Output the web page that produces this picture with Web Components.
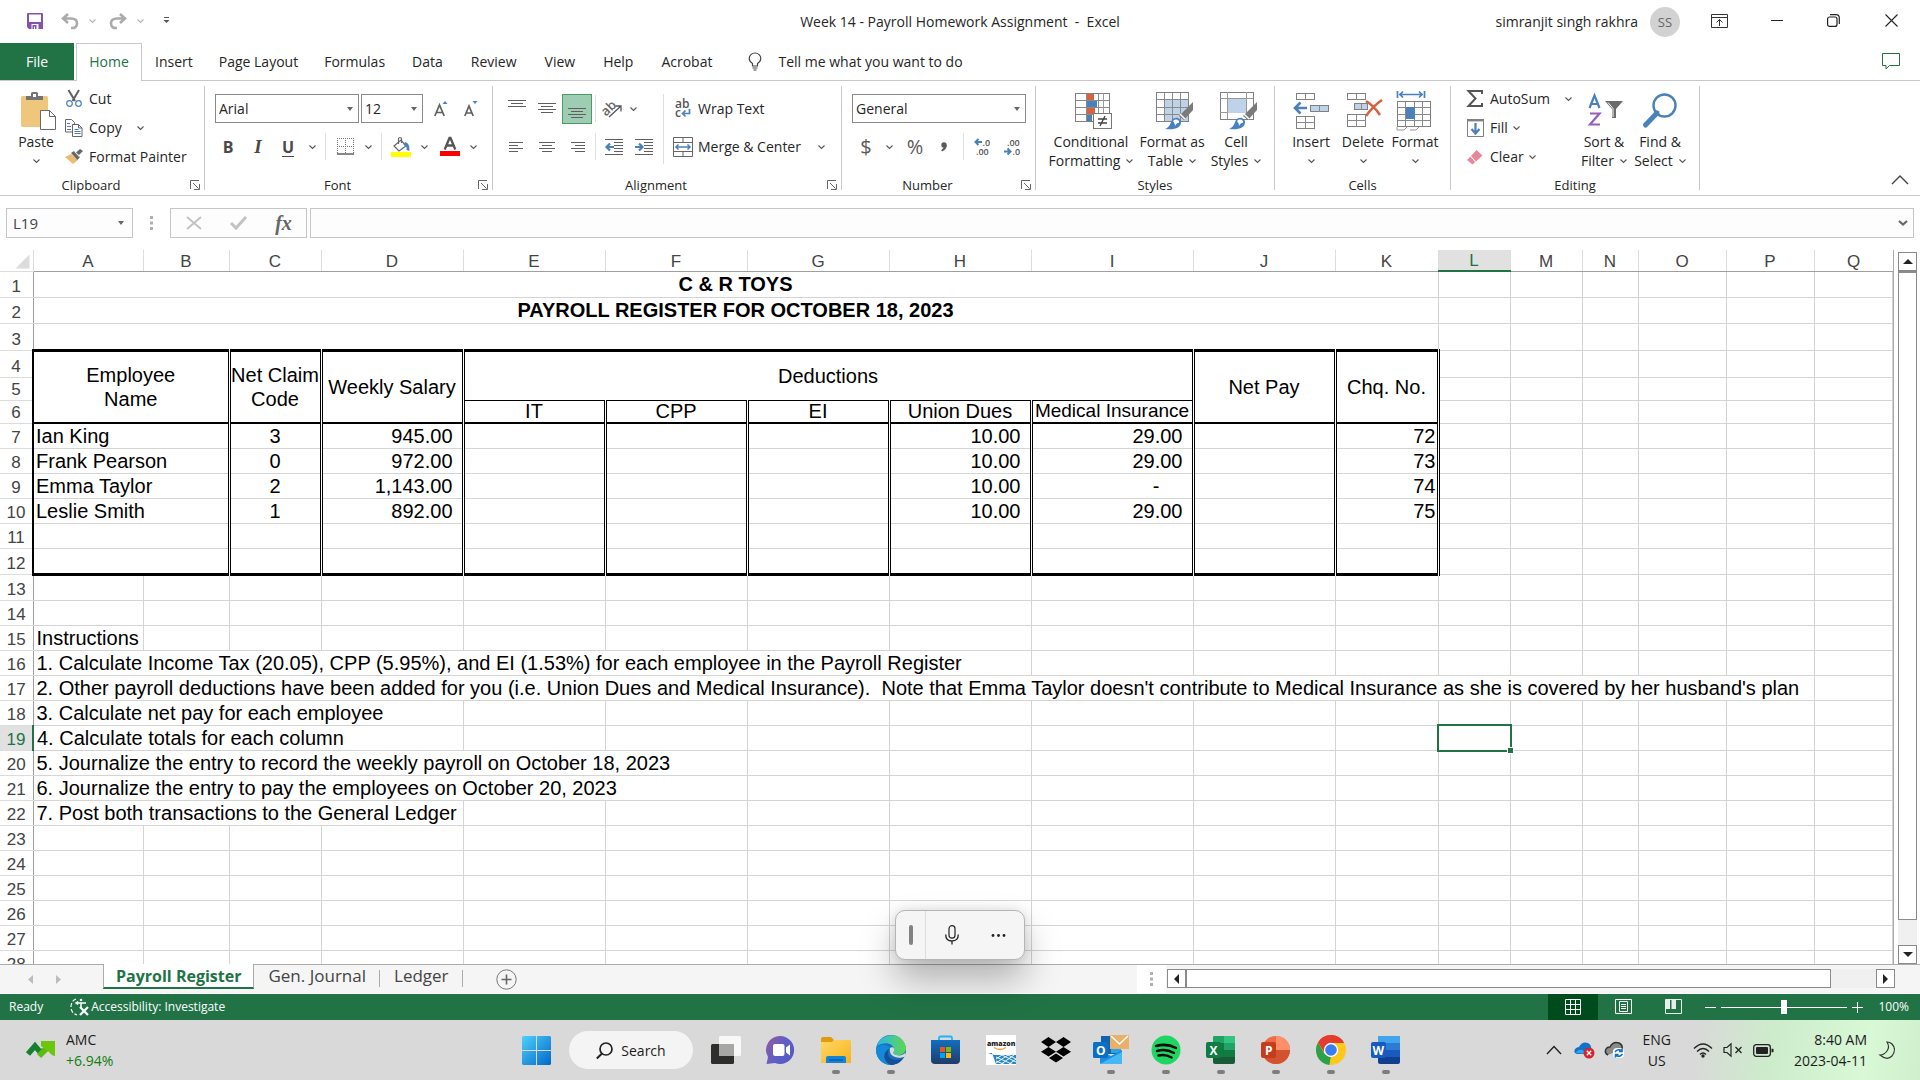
<!DOCTYPE html>
<html lang="en">
<head>
<meta charset="utf-8">
<title>Week 14 - Payroll Homework Assignment - Excel</title>
<style>
html, body { margin: 0; height: 100%; overflow: hidden; background: #fff; }
body { font: 14px/20px "Open Sans", "Noto Sans", sans-serif; color: #262626; }
</style>
</head>
<body>
<excel-app></excel-app>
<script>
const BASE = `
*{box-sizing:border-box}
button,input,select{font:inherit;color:inherit;margin:0;padding:0;border:0;background:none;border-radius:0;outline:0}
button{display:inline-flex;align-items:center;justify-content:center;white-space:nowrap}
`;
function define(name, css, render, after) {
  customElements.define(name, class extends HTMLElement {
    connectedCallback() {
      if (this.shadowRoot) return;
      const t = document.createElement('template');
      t.innerHTML = `<style>${BASE}${css}</style>${render(this)}`;
      this.attachShadow({ mode: 'open' }).append(t.content.cloneNode(true));
      if (after) after(this);
    }
  });
}

/* ---------- icons: [width, height, drawing] ---------- */
const B = '#4a80bb', G = '#6a6a6a';
const gridLines = (x, y, w, h, nx, ny, c = '#8a8a8a') => {
  let s = `<rect x="${x + .5}" y="${y + .5}" width="${w}" height="${h}" fill="none" stroke="#808080"/>`;
  for (let i = 1; i < nx; i++) s += `<path d="M${x + .5 + Math.round(w / nx * i)} ${y + 1}v${h}" stroke="${c}"/>`;
  for (let i = 1; i < ny; i++) s += `<path d="M${x + 1} ${y + .5 + Math.round(h / ny * i)}h${w}" stroke="${c}"/>`;
  return s;
};
const lines = (list, c = '#5f5f5f') => list.map(([x, y, w]) => `<path d="M${x} ${y + .5}h${w}" stroke="${c}"/>`).join('');
const BRUSH = `<path d="M37 10 L37 18 L28 28 L23 24Z" fill="#7b7b7b"/><path d="M24 22l5 5" stroke="#fff" stroke-width="1.5"/><path d="M9 37c5-2 5-5 7-9 3-4 9-2 9 2 0 6-6 8-16 7z" fill="${B}"/><path d="M17 29c3-3 7-1 6 2-1-1-3 1-4 3 0-2-1-4-2-5z" fill="#fff"/>`;
const office = (dark, c1, c2, c3, c4, letter) => `<rect x="7" y="1" width="22" height="28" rx="2" fill="${c4}"/><path d="M7 3q0-2 2-2h9v7H7z" fill="${c1}"/><path d="M18 1h9q2 0 2 2v5H18z" fill="${c2}"/><path d="M7 8h11v7H7z" fill="${c3}"/><path d="M18 8h11v7H18z" fill="${c1}"/><path d="M7 15h22v7H7z" fill="${c3}"/><path d="M7 15h11v7H7z" fill="${dark}" opacity=".6"/><rect x="0" y="7" width="15" height="16" rx="2" fill="${dark}"/>${letter}`;
const ICONS = {
  chev: [7, 4, `<path d="M.5.5l3 3 3-3" fill="none" stroke="#555" stroke-width="1.1"/>`],
  chevLight: [7, 4, `<path d="M.5.5l3 3 3-3" fill="none" stroke="#b5b5b5" stroke-width="1.1"/>`],
  tri: [6, 4, `<path d="M0 0h6L3 4z" fill="#666"/>`],
  save: [16, 16, `<path d="M0 1q0-1 1-1h14q1 0 1 1v15H2l-2-2z" fill="#8452ab"/><path d="M2 1.500h12V9H2z" fill="#fff"/><path d="M4.500 11h7v5h-7z" fill="#fff"/><path d="M5.500 12h4v4H8v-2.500H7V16H5.500z" fill="#8452ab"/>`],
  undo: [18, 16, `<path d="M7 1L2 5.500l5 4.500M2.500 5.500H10q6 0 6 5t-6 4.500" fill="none" stroke="#ababab" stroke-width="2.600"/>`],
  redo: [18, 16, `<path d="M11 1l5 4.500L11 10M15.500 5.500H8q-6 0-6 5t6 4.500" fill="none" stroke="#ababab" stroke-width="2.600"/>`],
  custom: [7, 7, `<path d="M1 .5h5" stroke="#555"/><path d="M.5 3h6l-3 3z" fill="#555"/>`],
  bulb: [14, 19, `<path d="M4.500 14v-2.500C2 10 1.200 8 1.200 6.500a5.800 5.500 0 0 1 11.600 0c0 1.500-.8 3.500-3.300 5V14zM4.500 16h5M5.500 18h3" fill="none" stroke="#444" stroke-width="1.200"/>`],
  ribbonOpt: [17, 14, `<path d="M.5.5h16v13H.5zM.5 3.500h16M8.500 12V5.500M5.500 8.500l3-3 3 3" fill="none" stroke="#333"/>`],
  min: [12, 2, `<path d="M0 .5h12" stroke="#222"/>`],
  restore: [13, 13, `<rect x=".6" y="3" width="9.400" height="9.400" rx="2" fill="none" stroke="#222" stroke-width="1.200"/><path d="M3 .7h6q3.300 0 3.300 3.300v6" fill="none" stroke="#222" stroke-width="1.200"/>`],
  close: [13, 13, `<path d="M.5.5l12 12M12.500.5l-12 12" stroke="#222" stroke-width="1.100"/>`],
  comment: [18, 17, `<path d="M.5.500h17v12H7.500L4 16v-3.500H.5z" fill="#fff" stroke="#217346"/>`],
  paste: [35, 38, `<rect x="0" y="4" width="27" height="31" rx="1.500" fill="#eec67c"/><path d="M5 8V4h5V1.500Q10 0 11.500 0h4Q17 0 17 1.500V4h5v4z" fill="#737373"/><rect x="12" y="2" width="3" height="3" fill="#fff"/><path d="M19.500 18.500h9l6 6V37.500h-15z" fill="#fff" stroke="#6a6a6a"/><path d="M28.500 18.500v6h6" fill="none" stroke="#6a6a6a"/>`],
  cut: [16, 17, `<path d="M2.500 0l6.500 11M13 0L6.500 11" stroke="#606060" stroke-width="2"/><circle cx="3.500" cy="13.500" r="2.800" fill="#fff" stroke="${B}" stroke-width="1.200"/><circle cx="12.500" cy="13.500" r="2.800" fill="#fff" stroke="${B}" stroke-width="1.200"/>`],
  copy: [18, 18, `<path d="M.5.5h6l3 3v9.500h-9z" fill="#fff" stroke="#666"/><path d="M7.500 5.500h6l3.500 3.500v8.500H7.500z" fill="#fff" stroke="#666"/><path d="M13.500 5.500V9H17" fill="none" stroke="#666"/><path d="M2 4.500h3M2 7.500h4M2 10.500h4M9.500 10.500h4M9.500 12.500h6M9.500 14.500h6" stroke="${B}"/>`],
  painter: [18, 15, `<path d="M0 8l6-3 7 6-5 4z" fill="#eabd74"/><path d="M6 4l3-2 6 6-2.500 3z" fill="#666"/><path d="M11 3.500L15 0l3 2-4 4z" fill="#666"/><path d="M9.500 2.500l5 5.500" stroke="#fff" stroke-width=".8"/>`],
  bigA: [14, 16, `<path d="M.8 15L5.500 4l4.700 11M2.500 11.500h6" fill="none" stroke="#606060" stroke-width="1.700"/><path d="M8.500 3L11 0l2.500 3z" fill="${B}"/>`],
  smallA: [14, 16, `<path d="M.8 15L5 5l4.200 10M2.500 12h5" fill="none" stroke="#606060" stroke-width="1.700"/><path d="M8.500 0h5L11 3z" fill="${B}"/>`],
  borders: [17, 17, `<path d="M.5 0v16M16.500 0v16M8.500 0v16M0 .5h17M0 8.500h17" stroke="#777" stroke-dasharray="1 1"/><path d="M0 16h17" stroke="#555" stroke-width="1.400"/>`],
  fill: [20, 20, `<path d="M3 9l7-6 5 6-7 5z" fill="#fff" stroke="#666" stroke-width="1.200"/><path d="M7.500 7V2q0-1.500 1.500-1.500T10.500 2v4" fill="none" stroke="#666" stroke-width="1.200"/><path d="M14 5q5 1 4.500 9l-3-1q1-4-3-5z" fill="${B}"/><rect y="15" width="20" height="5" fill="#ff0"/>`],
  fontcolor: [20, 19, `<path d="M4.700 12.500L9.500 1h1l4.800 11.500M6.500 8.500h7" fill="none" stroke="#555" stroke-width="2.300"/><rect y="14" width="20" height="5" fill="#f00"/>`],
  comma: [8, 10, `<circle cx="4" cy="3" r="2.700" fill="#5a5a5a"/><path d="M6.700 3q.3 4-4.700 6.500l-.8-1.300Q4 6.500 4 4z" fill="#5a5a5a"/>`],
  alTop: [18, 20, lines([[0, 1, 18], [3, 4, 12], [0, 7, 18]])],
  alMid: [18, 20, lines([[0, 4, 18], [3, 7, 12], [0, 10, 18], [3, 13, 12]])],
  alBot: [18, 20, lines([[0, 9, 18], [3, 12, 12], [0, 15, 18], [3, 18, 12]])],
  alL: [16, 12, lines([[0, 1, 14], [0, 4, 9], [0, 7, 14], [0, 10, 9]])],
  alC: [16, 12, lines([[0, 1, 16], [3, 4, 10], [0, 7, 16], [3, 10, 10]])],
  alR: [16, 12, lines([[2, 1, 14], [6, 4, 10], [2, 7, 14], [6, 10, 10]])],
  orient: [20, 20, `<g transform="rotate(-45 8 10)"><text x="-1" y="12" font-family="Open Sans" font-weight="600" font-size="13" fill="#666">ab</text></g><path d="M6 18L18 7M12.500 7H18v5.500" fill="none" stroke="#555" stroke-width="1.300"/>`],
  indentL: [18, 18, lines([[0, 1, 18], [9, 4, 9], [9, 7, 9], [9, 10, 9], [9, 13, 9], [0, 16, 18]]) + `<path d="M9 9H2M5 5.500L1.500 9 5 12.500" fill="none" stroke="${B}" stroke-width="2.200"/>`],
  indentR: [18, 18, lines([[0, 1, 18], [9, 4, 9], [9, 7, 9], [9, 10, 9], [9, 13, 9], [0, 16, 18]]) + `<path d="M0 9h7M4 5.500L7.500 9 4 12.500" fill="none" stroke="${B}" stroke-width="2.200"/>`],
  wrap: [18, 20, `<text x="1" y="9" font-family="Open Sans" font-weight="600" font-size="12" fill="#555">ab</text><text x="1" y="18" font-family="Open Sans" font-weight="600" font-size="12" fill="#555">c</text><path d="M15.500 10v4.500H9M11.500 11.500l-3 3 3 3" fill="none" stroke="${B}" stroke-width="1.700"/>`],
  merge: [20, 20, `<path d="M.5.500h19v19H.5zM.5 5.500h19M.5 14.500h19M10 .5v5M10 14.500v5" fill="none" stroke="#666"/><path d="M3.500 10h13M5.500 7.500L3 10l2.500 2.500M14.500 7.500L17 10l-2.500 2.500" fill="none" stroke="${B}" stroke-width="1.500"/>`],
  decInc: [18, 18, `<path d="M8 4H2M4.500 1L1.500 4l3 3" fill="none" stroke="${B}" stroke-width="2"/><text x="8.500" y="8" font-family="Open Sans" font-size="9" font-weight="600" fill="#555">.0</text><text x="2" y="17" font-family="Open Sans" font-size="9" font-weight="600" fill="#555">.00</text>`],
  decDec: [18, 18, `<text x="3" y="8" font-family="Open Sans" font-size="9" font-weight="600" fill="#555">.00</text><path d="M0 13.500h6M3.500 10.500l3 3-3 3" fill="none" stroke="${B}" stroke-width="2"/><text x="8.500" y="17" font-family="Open Sans" font-size="9" font-weight="600" fill="#555">.0</text>`],
  cond: [38, 36, `<rect x="1" y="1" width="33" height="28" fill="#fff"/><rect x="11" y="1" width="8" height="6" fill="#d8623f"/><rect x="11" y="8" width="11" height="7" fill="${B}"/><rect x="11" y="15" width="9" height="7" fill="#d8623f"/><rect x="11" y="22" width="6" height="7" fill="${B}"/>${gridLines(0, 0, 34, 28, 3, 4)}<path d="M28.500 0v28" stroke="#999"/><rect x="18.500" y="20.500" width="18" height="15" fill="#fff" stroke="#777"/><path d="M23 26h9M23 30h9M30 23l-5 10" stroke="#444" stroke-width="1.400"/>`],
  ftable: [38, 38, `<rect x="9" y="8" width="23" height="22" fill="#bed2e8"/>${gridLines(0, 0, 32, 29, 4, 4)}${BRUSH}`],
  cstyles: [39, 38, `${gridLines(0, 0, 33, 27, 1, 1)}<path d="M7.500 0v27M26.500 0v27M0 6.500h33M0 20.500h33" stroke="#999"/><rect x="8" y="7" width="18" height="14" fill="#bed2e8"/>${BRUSH}`],
  insert: [36, 36, `${gridLines(3, 0, 18, 6, 2, 1)}${gridLines(3, 23, 18, 12, 2, 2)}<rect x="18" y="12" width="17" height="6" fill="#bed2e8"/>${gridLines(17, 12, 18, 6, 2, 1)}<path d="M14 15H3M7.500 9.500L2 15l5.500 5.500" fill="none" stroke="${B}" stroke-width="2.600"/>`],
  del: [36, 36, `${gridLines(0, 0, 18, 6, 2, 1)}${gridLines(0, 21, 18, 12, 2, 2)}<rect x="8" y="10" width="12" height="6" fill="#bed2e8"/>${gridLines(7, 10, 13, 6, 2, 1)}<path d="M19 8q8 5 14 14M35 7Q26 13 19 23" fill="none" stroke="#d8623f" stroke-width="2.600"/>`],
  format: [36, 40, `<path d="M.5 0v7M27.500 0v7M2 3.500h24M6 .5L3 3.500l3 3M22 .5l3 3-3 3" fill="none" stroke="${B}" stroke-width="1.700"/><g transform="translate(0 10)">${gridLines(0, 0, 33, 25, 4, 4)}<rect x="9" y="6" width="9" height="12" fill="${B}"/><path d="M0 26v3h7l3-3M13 29h6l3-3" fill="none" stroke="#999"/></g>`],
  sum: [16, 17, `<path d="M15 4V1H1.500L8.500 8.500 1.500 16H15v-3" fill="none" stroke="#555" stroke-width="2"/>`],
  filldown: [17, 18, `<path d="M.5 1v16.500h16V1" fill="#fff" stroke="#808080"/><path d="M0 1.200h17" stroke="#808080" stroke-width="2.400"/><path d="M8.500 4v10M4.500 10l4 4.500 4-4.500" fill="none" stroke="${B}" stroke-width="2.200"/>`],
  clear: [16, 16, `<path d="M9.500 1L15.500 6.500 9 12.500 4 7z" fill="#e8869a"/><path d="M3.300 7.800L8.200 13l-2.700 2.500L0 11z" fill="#e8869a"/>`],
  sort: [36, 34, `<path d="M1.500 14L6.500 1.500 11.500 14M3 10h7" fill="none" stroke="${B}" stroke-width="2.200"/><path d="M2 19.500h9.500L2 30.500h10" fill="none" stroke="#9a5fbd" stroke-width="2.200"/><path d="M17 7h18l-7 8v9h-4v-9z" fill="#6a6a6a"/><path d="M20 8.500l5 6V23" fill="none" stroke="#fff" stroke-width="1"/>`],
  find: [34, 35, `<circle cx="21.500" cy="12.500" r="11" fill="none" stroke="${B}" stroke-width="2.400"/><path d="M14 20L2.500 32" stroke="${B}" stroke-width="5" stroke-linecap="round"/>`],
  launch: [10, 10, `<path d="M.5 9V.5H9M3 3l5.500 5.500M9.500 4v5.500H4" fill="none" stroke="#666"/>`],
  collapse: [18, 10, `<path d="M1 9l8-8 8 8" fill="none" stroke="#444" stroke-width="1.400"/>`],
  x: [16, 14, `<path d="M1 1l14 12M15 1L1 13" stroke="#c3c3c3" stroke-width="2"/>`],
  check: [17, 14, `<path d="M1 7l5 5L16 1" fill="none" stroke="#c3c3c3" stroke-width="3"/>`],
  dots: [3, 14, `<path d="M0 0h3v3H0zM0 5.500h3v3H0zM0 11h3v3H0z" fill="#b0b0b0"/>`],
  fchev: [10, 6, `<path d="M1 1l4 3.500L9 1" fill="none" stroke="#666" stroke-width="2.200"/>`],
  up: [10, 5, `<path d="M5 0l5 5H0z" fill="#222"/>`], down: [10, 5, `<path d="M5 5L0 0h10z" fill="#222"/>`],
  left: [5, 10, `<path d="M0 5l5-5v10z" fill="#222"/>`], right: [5, 10, `<path d="M5 5L0 0v10z" fill="#222"/>`],
  navL: [5, 9, `<path d="M0 4.500L5 0v9z" fill="#bcbcbc"/>`], navR: [5, 9, `<path d="M5 4.500L0 0v9z" fill="#bcbcbc"/>`],
  plus: [21, 21, `<circle cx="10.500" cy="10.500" r="9.700" fill="none" stroke="#777"/><path d="M10.500 5.500v10M5.500 10.500h10" stroke="#666" stroke-width="1.600"/>`],
  access: [19, 18, `<path d="M6 1Q1 3 1 9t6 8" fill="none" stroke="#fff" stroke-width="1.200" stroke-dasharray="4 2"/><circle cx="11" cy="2" r="1.300" fill="#fff"/><path d="M6 5h10M11 5v5M8 3.500L6 5l2 1.500" fill="none" stroke="#fff" stroke-width="1.500"/><path d="M10 9l8 8M18 9l-8 8" stroke="#fff" stroke-width="2.200"/>`],
  vNormal: [17, 17, `<path d="M.5.5h15v15H.5zM5.500 0v16M10.500 0v16M0 5.500h16M0 10.500h16" fill="none" stroke="#fff"/>`],
  vPage: [17, 16, `<path d="M.5.5h16v14H.5zM4.500 2.500h8v10h-8zM6 5.500h5M6 7.500h5M6 9.500h5" fill="none" stroke="#fff"/>`],
  vBreak: [17, 16, `<path d="M.5.5h16v14H.5z" fill="none" stroke="#e6efe9"/><path d="M1 1h4v9H1zM6.500 1H11v9H6.500z" fill="#e6efe9"/>`],
  stocks: [28, 20, `<path d="M1 14l7-8 6 7 3-3" fill="none" stroke="#178030" stroke-width="5.500"/><path d="M12 16L22 6" stroke="#5bbd13" stroke-width="6"/><path d="M14 1h14v15q-3 0-6-4l-8-6z" fill="#6cc70c"/>`],
  windows: [29, 29, `<defs><linearGradient id="w" x2="1" y2="1"><stop stop-color="#4fd0fb"/><stop offset="1" stop-color="#0067c9"/></linearGradient></defs><path d="M1 0h13v14H0V1zM15 0h13l1 1v13H15zM0 15h14v14H1l-1-1zM15 15h14v13l-1 1H15z" fill="url(#w)"/>`],
  search: [17, 17, `<circle cx="10" cy="7" r="6" fill="none" stroke="#222" stroke-width="1.700"/><path d="M6 11.500L.8 16.500" stroke="#222" stroke-width="2"/>`],
  taskview: [30, 30, `<rect x="0" y="9" width="23" height="20" rx="1.500" fill="#2d2d2b"/><rect x="8" y="1" width="22" height="20" rx="1.500" fill="#f8f8f8"/><path d="M8 9h15v12H9.500Q8 21 8 19.500z" fill="#a7a7a6"/>`],
  chat: [30, 30, `<defs><linearGradient id="c" x2="1" y1=".2" y2=".8"><stop stop-color="#8d5ba3"/><stop offset=".5" stop-color="#5f5fc5"/><stop offset="1" stop-color="#5159c4"/></linearGradient></defs><path d="M15 1a14 14 0 1 1-6 27L.5 29 2 22A14 14 0 0 1 15 1z" fill="url(#c)"/><rect x="7" y="9" width="11.500" height="12" rx="2" fill="#fff"/><path d="M20 12.500l4-3v11l-4-3z" fill="#fff"/>`],
  folder: [30, 30, `<defs><linearGradient id="f" x2="1" y2="1"><stop stop-color="#ffd867"/><stop offset="1" stop-color="#f7b21c"/></linearGradient></defs><path d="M0 4q0-2 2-2h8l3 3v4H0z" fill="#de9c09"/><path d="M0 7h11l2-2h16l1 1v22H0z" fill="url(#f)"/><path d="M5 28v-5q0-2 2-2h16q2 0 2 2v5z" fill="#1383d8"/><path d="M8 25h14" stroke="#0b5ca8" stroke-width="1.500"/>`],
  edge: [30, 30, `<defs><linearGradient id="e" x2="1"><stop stop-color="#2cb6f0"/><stop offset="1" stop-color="#5fd84c"/></linearGradient></defs><circle cx="15" cy="15" r="15" fill="#1671bd"/><path d="M1 11C5-3 27-4 30 13c0 5-5 8-10 7-4-1-2-3-2-5 0-7-10-9-17-4z" fill="url(#e)"/><path d="M0 14c2-5 11-6 14-1-5 2-5 12 2 15l-1 2C7 30 0 24 0 14z" fill="#1489dc"/><path d="M13 14c-4 8 4 14 14 9-3 5-8 7-12 7-8-3-9-13-2-16z" fill="#164f98"/><path d="M14 13c3-2 5 1 4 3s-1 3 2 4c4 1 7 0 9-2l1 3c-7 4-18 1-16-8z" fill="#d9d9d9"/>`],
  store: [30, 30, `<defs><linearGradient id="s" x2="0" y2="1"><stop stop-color="#116fc0"/><stop offset="1" stop-color="#1f3b68"/></linearGradient></defs><path d="M8 7V3q0-1.500 1.500-1.500h10Q21 1.500 21 3v4" fill="none" stroke="#24b4f3" stroke-width="1.800"/><path d="M0 5h29v20q0 4-4 4H4q-4 0-4-4z" fill="url(#s)"/><path d="M9 12h5v5H9z" fill="#f25022"/><path d="M15 12h5v5h-5z" fill="#7fba00"/><path d="M9 18h5v5H9z" fill="#00a4ef"/><path d="M15 18h5v5h-5z" fill="#ffb900"/>`],
  amazon: [30, 30, `<rect width="30" height="30" fill="#fff"/><text x="1" y="11" font-family="Open Sans" font-weight="800" font-size="7" fill="#222">amazon</text><path d="M8 12.500q6 4 12 0" fill="none" stroke="#f29b38" stroke-width="1.300"/><path d="M2 18h4l4 11h20V20H8" fill="#2787c4"/><path d="M10 22l18 8M10 26l10 4M16 20l14 7M22 20l8 4M28 20L14 30M22 20L10 28M16 20l-6 4M30 24l-8 6" stroke="#fff" stroke-width=".9"/>`],
  dropbox: [30, 30, `<path d="M7.500 2L15 7l-7.500 5L0 7zM22.500 2L30 7l-7.500 5L15 7zM7.500 12l7.500 4.800-7.500 4.700L0 16.800zM22.500 12l7.500 4.800-7.500 4.700-7.500-4.700zM15 18.500l7 4.500-7 4.500L8 23z" fill="#000"/>`],
  outlook: [36, 30, `<rect x="8" y="1" width="20" height="18" fill="#0f64b2"/><rect x="18" y="6" width="10" height="12" fill="#2aa4e8"/><path d="M7 15l11 6 11-6v13q0 1-1 1H8q-1 0-1-1z" fill="#1a8fe0"/><path d="M7 29l22-12v12z" fill="#46b9f5"/><rect x="0" y="7" width="15" height="16" rx="1.500" fill="#0a6fc9"/><text x="3" y="20" font-family="Open Sans" font-weight="700" font-size="12" fill="#fff">O</text><rect x="17" y="0" width="19" height="14" fill="#eab06a"/><path d="M18 1l8.500 8L35 1" fill="none" stroke="#fff" stroke-width="1.500"/>`],
  spotify: [30, 30, `<circle cx="15" cy="15" r="14.500" fill="#1fd662"/><path d="M5 11q11-3 20 2M6 16q9-2.500 17 2M7.500 20.500q7-1.500 13 2" fill="none" stroke="#0b0b0b" stroke-width="2.500" stroke-linecap="round"/>`],
  excel: [30, 30, office('#107c41', '#21a366', '#33c481', '#107c41', '#185c37', `<text x="3.500" y="19.500" font-family="Open Sans" font-weight="700" font-size="12" fill="#fff">X</text>`)],
  ppt: [30, 30, `<circle cx="15" cy="15" r="14" fill="#ed6c47"/><path d="M15 1a14 14 0 0 1 14 14H15z" fill="#ff8f6b"/><path d="M29 15a14 14 0 0 1-28 0z" fill="#d35230"/><rect x="0" y="7" width="15" height="16" rx="2" fill="#c43e1c"/><text x="4" y="19.500" font-family="Open Sans" font-weight="700" font-size="12" fill="#fff">P</text>`],
  chrome: [30, 30, `<circle cx="15" cy="15" r="15" fill="#fdc71c"/><path d="M2 7.500A15 15 0 0 1 28 7.500H15z" fill="#e33b2e"/><path d="M2 7.500L8.500 18.700 15 22l-1.500 8A15 15 0 0 1 2 7.500z" fill="#2da04c"/><path d="M2 7.500l6 9.500L15 8h13A15 15 0 0 0 2 7.500z" fill="#e33b2e"/><path d="M13.500 30L21 18.500 15 22z" fill="#fdc71c"/><circle cx="15" cy="15" r="7.200" fill="#fff"/><circle cx="15" cy="15" r="5.800" fill="#3a7df0"/>`],
  word: [30, 30, `<rect x="7" y="1" width="22" height="28" rx="2" fill="#103f91"/><path d="M7 3q0-2 2-2h18q2 0 2 2v5H7z" fill="#41a5ee"/><path d="M7 8h22v7H7z" fill="#2b7cd3"/><path d="M7 15h22v7H7z" fill="#185abd"/><rect x="0" y="7" width="15" height="16" rx="2" fill="#185abd"/><text x="1.500" y="19.500" font-family="Open Sans" font-weight="700" font-size="12" fill="#fff">W</text>`],
  trayUp: [16, 10, `<path d="M1 9l7-7.500L15 9" fill="none" stroke="#222" stroke-width="1.400"/>`],
  onedrive: [21, 18, `<path d="M3 13q-4-1-2-5 2-2 4-2Q8 0 14 2q4 2 3 7 2 2 0 4z" fill="#1272c9"/><path d="M2 12q2-4 6-3l8 4z" fill="#33a5ee"/><circle cx="15" cy="12" r="5.500" fill="#d3252f"/><path d="M12.800 9.800l4.400 4.400M17.200 9.800l-4.400 4.400" stroke="#fff" stroke-width="1.300"/>`],
  sync: [21, 18, `<path d="M4 14q-4-2-2-6 1-2 4-2 3-6 9-4 4 2 3 6" fill="#8b8b8b" stroke="#333" stroke-width="1.500"/><rect x="9" y="7" width="11" height="10" rx="4" fill="#fff"/><path d="M11 11q3-4 7-1M18 7.500V10.500h-3M18.500 13q-3 4-7 1M11.500 16.500v-3h3" fill="none" stroke="#1372c5" stroke-width="1.600"/>`],
  wifi: [20, 16, `<path d="M1 6.500q9-9 18 0M4 9.500q6-6 12 0M7 12.500q3-3 6 0" fill="none" stroke="#222" stroke-width="1.400"/><circle cx="10" cy="14" r="1.700" fill="#222"/>`],
  mute: [20, 14, `<path d="M1 4.500h3L8 .8v12.400L4 9.500H1z" fill="none" stroke="#222" stroke-width="1.200"/><path d="M12.500 4l6 6M18.500 4l-6 6" stroke="#222" stroke-width="1.300"/>`],
  battery: [21, 13, `<rect x=".7" y=".7" width="16.600" height="11.600" rx="2.500" fill="none" stroke="#222" stroke-width="1.300"/><rect x="3" y="3" width="12" height="7" rx="1" fill="#222"/><path d="M18.500 4.500l2 .5v3l-2 .5z" fill="#222"/>`],
  moon: [17, 18, `<path d="M8 1q3 5 0 9t-7 4q7 6 12 1 5-7 0-12-2-2-5-2z" fill="none" stroke="#333" stroke-width="1.200"/>`],
  mic: [14, 20, `<rect x="4" y=".7" width="6" height="12.500" rx="3" fill="none" stroke="#222" stroke-width="1.200"/><path d="M.7 9.500q0 6.500 6.300 6.500t6.300-6.500M7 16v3.500" fill="none" stroke="#222" stroke-width="1.300"/>`],
  more: [15, 3, `<circle cx="2" cy="1.500" r="1.400" fill="#222"/><circle cx="7.500" cy="1.500" r="1.400" fill="#222"/><circle cx="13" cy="1.500" r="1.400" fill="#222"/>`]
};
define('ui-icon', `:host{display:inline-flex;flex:none}svg{display:block;overflow:visible}`, el => {
  const [w, h, d] = ICONS[el.getAttribute('name')];
  return `<svg width="${w}" height="${h}" viewBox="0 0 ${w} ${h}" aria-hidden="true">${d}</svg>`;
});
const icon = n => `<ui-icon name="${n}"></ui-icon>`;

/* ---------- ribbon pieces ---------- */
define('icon-button', `:host{display:inline-flex;flex:none;width:30px;height:30px}button{width:100%;height:100%}:host([active]) button{background:#9fcdb3;border:1px solid #4c9a6c}`,
  el => `<button type="button" aria-label="${el.getAttribute('label') || el.getAttribute('icon')}">${icon(el.getAttribute('icon'))}</button>`);
define('text-button', `:host{display:flex;height:29px}button{gap:5px}.i{width:20px;display:flex;justify-content:center}.c{display:flex;padding-left:var(--chev-gap,4px)}`,
  el => `<button type="button"><span class="i">${icon(el.getAttribute('icon'))}</span><slot></slot>${el.hasAttribute('chev') ? `<span class="c">${icon('chev')}</span>` : ''}</button>`);
define('big-button', `:host{display:flex}button{width:100%;flex-direction:column;justify-content:flex-start;padding-top:5px;line-height:19px}.i{height:43px;display:flex;align-items:center;padding-left:var(--icon-inset,0)}.r{height:19px;display:flex;align-items:center;gap:6px}`,
  el => `<button type="button"><span class="i">${icon(el.getAttribute('icon'))}</span><span>${el.getAttribute('top')}</span><span class="r">${el.hasAttribute('bottom') ? `<span>${el.getAttribute('bottom')}</span>` : ''}${icon('chev')}</span></button>`);
define('combo-box', `:host{display:flex;position:relative;height:29px}select{appearance:none;width:100%;border:1px solid #8a8a8a;padding:0 3px;background:#fff}ui-icon{position:absolute;right:6px;top:13px;pointer-events:none}`,
  el => `<select aria-label="${el.getAttribute('label')}"><option>${el.getAttribute('value')}</option></select>${icon('tri')}`);
define('ribbon-group', `:host{display:flex;flex:none}section{flex:1;display:flex;flex-direction:column;padding-top:3px}.body{height:87px;display:flex}.foot{display:flex;padding-top:4px;align-items:center;height:24px;text-align:center;font-size:13px}.foot span{flex:1}.foot button{width:22px;padding-left:4px}.sep{width:1px;margin:5px 0;background:#c8c8c8}`,
  el => `<section aria-label="${el.getAttribute('label')}"><div class="body"><slot></slot></div><div class="foot"><span>${el.getAttribute('label')}</span>${el.hasAttribute('launch') ? `<button type="button" aria-label="More ${el.getAttribute('label')} options">${icon('launch')}</button>` : ''}</div></section><div class="sep"></div>`);

define('excel-ribbon', `
:host{display:flex;border-bottom:1px solid #c8c8c8;height:115px;flex:none}
.col{display:flex;flex-direction:column}
.two{display:flex;flex-direction:column;gap:9px;padding-top:10px}
.two.r{padding-left:9px}
.row{display:flex;align-items:center;height:29px}
.vs{width:1px;height:27px;background:#dedede;margin:0 5px 0 4px}
.vt{width:1px;height:70px;background:#dedede;margin-top:10px}
.ch{width:18px}.cs{width:12px}.w28{width:28px}
.g{font-weight:700;color:#4a4a4a;width:30px;height:30px;font-size:16px}
.sym{color:#5a5a5a;font-size:20px;height:30px}
.end{margin-left:auto;align-self:flex-end;padding:0 11px 5px 0}
`, () => `
<ribbon-group label="Clipboard" launch style="width:205px">
  <big-button icon="paste" top="Paste" style="width:64px;margin-left:4px;--icon-inset:4px"></big-button>
  <div class="col" style="margin-left:-4px"><text-button icon="cut">Cut</text-button><text-button icon="copy" chev style="--chev-gap:10px">Copy</text-button><text-button icon="painter">Format Painter</text-button></div>
</ribbon-group>
<ribbon-group label="Font" launch style="width:288px">
  <div class="two" style="padding-left:8px">
    <div class="row" style="padding-left:2px"><combo-box label="Font" value="Arial" style="width:144px;margin-right:2px"></combo-box><combo-box label="Font size" value="12" style="width:62px;margin-right:3px"></combo-box><icon-button icon="bigA" label="Increase font size"></icon-button><icon-button icon="smallA" label="Decrease font size"></icon-button></div>
    <div class="row"><button class="g">B</button><button class="g" style="font-family:'Liberation Serif';font-style:italic;font-size:19px">I</button><button class="g" style="text-decoration:underline;text-underline-offset:3px">U</button><icon-button class="ch" icon="chev"></icon-button><i class="vs"></i><icon-button class="w28" icon="borders"></icon-button><icon-button class="ch" icon="chev"></icon-button><i class="vs"></i><icon-button class="w28" icon="fill"></icon-button><icon-button class="ch" icon="chev"></icon-button><icon-button icon="fontcolor" style="width:34px"></icon-button><icon-button class="ch" icon="chev" style="width:12px"></icon-button></div>
  </div>
</ribbon-group>
<ribbon-group label="Alignment" launch style="width:349px">
  <div class="two" style="padding-left:9px;width:170px">
    <div class="row"><icon-button icon="alTop"></icon-button><icon-button icon="alMid"></icon-button><icon-button icon="alBot" active></icon-button><i class="vs" style="margin:0 3px"></i><icon-button class="w28" icon="orient"></icon-button><icon-button class="cs" icon="chev"></icon-button></div>
    <div class="row"><icon-button icon="alL"></icon-button><icon-button icon="alC"></icon-button><icon-button icon="alR"></icon-button><i class="vs" style="margin:0 3px"></i><icon-button icon="indentL"></icon-button><icon-button icon="indentR"></icon-button></div>
  </div><i class="vt"></i>
  <div class="two r"><text-button icon="wrap">Wrap Text</text-button><text-button icon="merge" chev style="--chev-gap:12px">Merge &amp; Center</text-button></div>
</ribbon-group>
<ribbon-group label="Number" launch style="width:194px">
  <div class="two" style="padding-left:10px">
    <combo-box label="Number format" value="General" style="width:174px"></combo-box>
    <div class="row"><button class="sym" style="width:28px">$</button><icon-button class="ch" icon="chev"></icon-button><button class="sym" style="width:34px">%</button><icon-button icon="comma" label="Comma style" style="width:24px"></icon-button><i class="vs" style="margin:0 4px 0 7px"></i><icon-button icon="decInc"></icon-button><icon-button icon="decDec"></icon-button></div>
  </div>
</ribbon-group>
<ribbon-group label="Styles" style="width:239px;--icon-inset:6px"><big-button icon="cond" top="Conditional" bottom="Formatting" style="width:96px;margin-left:7px"></big-button><big-button icon="ftable" top="Format as" bottom="Table" style="width:66px"></big-button><big-button icon="cstyles" top="Cell" bottom="Styles" style="width:62px"></big-button></ribbon-group>
<ribbon-group label="Cells" style="width:176px"><big-button icon="insert" top="Insert" style="width:52px;margin-left:10px"></big-button><big-button icon="del" top="Delete" style="width:52px;--icon-inset:4px"></big-button><big-button icon="format" top="Format" style="width:52px"></big-button></ribbon-group>
<ribbon-group label="Editing" style="width:249px">
  <div class="col" style="padding-left:14px;width:125px"><text-button icon="sum" chev style="--chev-gap:10px">AutoSum</text-button><text-button icon="filldown" chev style="--chev-gap:0">Fill</text-button><text-button icon="clear" chev style="--chev-gap:0">Clear</text-button></div>
  <big-button icon="sort" top="Sort &amp;amp;" bottom="Filter" style="width:56px;--icon-inset:4px"></big-button><big-button icon="find" top="Find &amp;amp;" bottom="Select" style="width:56px"></big-button>
</ribbon-group>
<div class="end"><button type="button" aria-label="Collapse ribbon">${icon('collapse')}</button></div>`);

define('title-bar', `
:host{display:grid;grid-template-columns:1fr auto 1fr;height:43px;align-items:center;flex:none}
.q{display:flex;align-items:center;padding:0 0 2px 27px}.q :nth-child(2){margin-left:18px}.q :nth-child(3),.q :nth-child(5){margin-left:10px}.q :nth-child(4){margin-left:13px}.q :nth-child(6){margin-left:19px}
.t{white-space:pre}
.u{display:flex;align-items:center;justify-content:flex-end}
.av{width:30px;height:30px;border-radius:50%;background:#d2d2d2;color:#666;font-size:13px;line-height:30px;text-align:center;margin:0 19px 0 12px}
.u button{width:57px;height:38px}.u .o{width:40px;margin-right:9px}.u .z{width:58px}
.u button ui-icon{padding-bottom:2px}
`, () => `<div class="q"><button aria-label="Save">${icon('save')}</button><button aria-label="Undo">${icon('undo')}</button><button aria-label="Undo list">${icon('chevLight')}</button><button aria-label="Redo">${icon('redo')}</button><button aria-label="Redo list">${icon('chevLight')}</button><button aria-label="Customize">${icon('custom')}</button></div>
<div class="t">Week 14 - Payroll Homework Assignment  -  Excel</div>
<div class="u"><span>simranjit singh rakhra</span><span class="av">SS</span><button class="o" aria-label="Ribbon display options">${icon('ribbonOpt')}</button><button aria-label="Minimize">${icon('min')}</button><button aria-label="Restore">${icon('restore')}</button><button class="z" aria-label="Close">${icon('close')}</button></div>`);

define('tab-strip', `
:host{display:flex;height:38px;flex:none}
nav{display:flex;flex:1;border-bottom:1px solid #c8c8c8}
a{display:block;padding:0 13px;line-height:37px;height:38px;color:inherit;text-decoration:none}
a:nth-child(n+6){padding:0 14px}
a.file{background:#217346;color:#fff;width:74px;text-align:center;padding:0;height:37px;margin-right:2px}
a.on{color:#217346;border:1px solid #c8c8c8;border-bottom:0;background:#fff;padding:0;width:66px;text-align:center;line-height:36px}
.tell{padding-left:22px;display:flex;align-items:center;gap:16px;height:37px}
.cm{margin-left:auto;padding-right:20px}
`, () => `<nav><a class="file" href="#file">File</a><a class="on" href="#home">Home</a>${['Insert', 'Page Layout', 'Formulas', 'Data', 'Review', 'View', 'Help', 'Acrobat'].map(t => `<a href="#${t.toLowerCase().replace(' ', '-')}">${t}</a>`).join('')}<button class="tell">${icon('bulb')}<span>Tell me what you want to do</span></button><button class="cm" aria-label="Comments">${icon('comment')}</button></nav>`);

define('formula-bar', `
:host{display:flex;padding:12px 6px 12px;height:54px;flex:none}
.b{border:1px solid #c6c6c6;background:#fdfdfd;height:30px;display:flex;align-items:center}
.n{width:127px;padding:0 8px 0 6px}.n input{width:100%;font-size:15px;color:#444}
.d{width:37px;display:flex;align-items:center;justify-content:center}
.k{width:137px}.k button{flex:1;height:28px}.fx{font:italic 700 20px/24px "Liberation Serif",serif;color:#666}
.f{flex:1;margin-left:3px;padding:0 5px}.f input{flex:1}
`, () => `<div class="b n"><input aria-label="Name box" value="L19">${icon('tri')}</div><div class="d">${icon('dots')}</div><div class="b k"><button aria-label="Cancel">${icon('x')}</button><button aria-label="Enter">${icon('check')}</button><button class="fx">fx</button></div><div class="b f"><input aria-label="Formula bar">${icon('fchev')}</div>`);

/* ---------- worksheet ---------- */
const COLS = { A: 110, B: 86, C: 92, D: 142, E: 142, F: 142, G: 142, H: 142, I: 162, J: 142, K: 103, L: 72, M: 72, N: 56, O: 88, P: 88, Q: 0 };
const ROW_H = { 1: 26, 2: 26, 3: 27, 4: 27, 5: 23, 6: 23, 12: 26, 13: 26 };
const td = (t = '', cls = '', cs = 1, rs = 1) => `<td class="${cls}" colspan="${cs}" rowspan="${rs}">${t}</td>`;
const blanks = n => td().repeat(n);
const STAFF = [['Ian King', 3, '945.00', '29.00', 72], ['Frank Pearson', 0, '972.00', '29.00', 73], ['Emma Taylor', 2, '1,143.00', '-', 74], ['Leslie Smith', 1, '892.00', '29.00', 75]];
const NOTES = {
  15: [1, 'Instructions'], 16: [8, '1. Calculate Income Tax (20.05), CPP (5.95%), and EI (1.53%) for each employee in the Payroll Register'],
  17: [16, "2. Other payroll deductions have been added for you (i.e. Union Dues and Medical Insurance).  Note that Emma Taylor doesn't contribute to Medical Insurance as she is covered by her husband's plan"],
  18: [4, '3. Calculate net pay for each employee'], 19: [4, '4. Calculate totals for each column'],
  20: [6, '5. Journalize the entry to record the weekly payroll on October 18, 2023'],
  21: [6, '6. Journalize the entry to pay the employees on October 20, 2023'], 22: [4, '7. Post both transactions to the General Ledger']
};
function rowCells(r) {
  if (r === 1) return td('C &amp; R TOYS', 'c b', 11) + blanks(6);
  if (r === 2) return td('PAYROLL REGISTER FOR OCTOBER 18, 2023', 'c b', 11) + blanks(6);
  if (r === 3) return td('', 'thick', 11) + blanks(6);
  if (r === 4) return td('Employee<br>Name', 'h first', 2, 3) + td('Net Claim<br>Code', 'h', 1, 3) + td('Weekly Salary', 'h', 1, 3) + td('Deductions', 'h ded', 5, 2) + td('Net Pay', 'h', 1, 3) + td('Chq. No.', 'h', 1, 3) + blanks(6);
  if (r === 5) return blanks(6);
  if (r === 6) return ['IT', 'CPP', 'EI', 'Union Dues'].map(t => td(t, 'h')).join('') + td('Medical Insurance', 'h fit') + blanks(6);
  if (r <= 12) {
    const s = STAFF[r - 7] || ['', '', '', '', ''], l = r === 12 ? ' last' : '', e = td('', 'g' + l);
    return td(s[0], 'g first' + l, 2) + td(s[1], 'g c' + l) + td(s[2], 'g n' + l) + e + e + e + td(s[0] ? '10.00' : '', 'g n' + l) + td(s[3], (s[3] === '-' ? 'g n dash' : 'g n') + l) + e + td(s[4], 'g q' + l) + blanks(6);
  }
  if (NOTES[r]) {
    const [n, t] = NOTES[r];
    return td(t, '', n) + (r === 19 ? blanks(7) + '<td class="sel"><div></div></td>' + blanks(5) : blanks(17 - n));
  }
  return blanks(17);
}
define('work-sheet', `
:host{display:block;overflow:hidden;border-right:1px solid #ababab}
table{border-collapse:collapse;table-layout:fixed;width:100%;font:20px/24px "Liberation Sans",Arial,sans-serif;color:#000}
th,td{padding:0;font-weight:400;white-space:pre;overflow:visible}
td{border:1px solid #d4d4d4;padding:0 3px;height:0}
tr.r6 td{line-height:20px}
thead th{font-size:17px;line-height:18px;color:#444;border-left:1px solid #dcdcdc;border-bottom:1px solid #9f9f9f;height:21px;vertical-align:bottom}
thead th:first-child{border-left:0;border-bottom-color:#dcdcdc}
.corner{width:14px;height:14px;margin:0 3px 2px auto;background:#dcdcdc;clip-path:polygon(100% 0,100% 100%,0 100%)}
tbody th{font-size:17px;line-height:20px;color:#444;border-right:1px solid #9f9f9f;border-bottom:1px solid #dcdcdc;vertical-align:bottom}
th.on{background:#e1e1e1;color:#217346}
thead th.on{border-bottom:2px solid #217346}tbody th.on{border-right:2px solid #217346}
.c{text-align:center}.b{font-weight:700}
.thick{border-bottom:3px solid #000}
.h{text-align:center;border-left:3px double #000;border-right:3px double #000;border-bottom:2px solid #000;border-top:1px solid #000;padding:0}
.ded{border-bottom:1px solid #000}
.fit{font-size:19px}
tr.r4 .h{border-top:3px solid #000}
.g{border-left:3px double #000;border-right:3px double #000;padding:0 1px}
.first{border-left:2px solid #000}.g.first{padding-left:2px}
.n{text-align:right;padding-right:9px}.dash{padding-right:32px}.q{text-align:right}
.last{border-bottom:3px solid #000}
.sel{position:relative;padding:0}
.sel div{position:absolute;inset:-2px;border:2px solid #217346}
.sel div::after{content:"";position:absolute;right:-4px;bottom:-4px;width:5px;height:5px;background:#217346;border:1px solid #fff}
`, () => {
  let rows = '';
  for (let r = 1; r <= 28; r++) rows += `<tr class="r${r}" style="height:${ROW_H[r] || 25}px"><th scope="row"${r === 19 ? ' class="on"' : ''}>${r}</th>${rowCells(r)}</tr>`;
  return `<table><colgroup><col style="width:33px">${Object.values(COLS).map(w => `<col${w ? ` style="width:${w}px"` : ''}>`).join('')}</colgroup><thead><tr><th><div class="corner"></div></th>${Object.keys(COLS).map(c => `<th scope="col"${c === 'L' ? ' class="on"' : ''}>${c}</th>`).join('')}</tr></thead><tbody>${rows}</tbody></table>`;
});
define('scroll-bar', `
:host{display:flex;background:#f0f0f0}
:host([vertical]){flex-direction:column}
button{width:19px;height:19px;border:1px solid #8a8a8a;background:#fff;flex:none}
.t{border:1px solid #8a8a8a;background:#fff;flex:var(--thumb)}.s{flex:var(--space)}
:host([vertical]) .t{border-top-width:2px}
`, el => { const v = el.hasAttribute('vertical'); return `<button aria-label="Back">${icon(v ? 'up' : 'left')}</button><div class="t"></div><div class="s"></div><button aria-label="Forward">${icon(v ? 'down' : 'right')}</button>`; });

define('sheet-tabs', `
:host{display:flex;height:30px;background:#f5f5f5;border-top:1px solid #ababab;border-bottom:1px solid #fff;color:#444;flex:none}
.nav{width:103px;display:flex;gap:23px;padding-left:28px;align-items:center}
.tab{height:22px;font-size:17px;padding:0 14px;background:linear-gradient(#ababab,#ababab) right bottom/1px 17px no-repeat}
.on{font-size:16px;font-weight:700;color:#217346;background:#fff;border-bottom:2px solid #217346;border-left:1px solid #ababab;border-right:1px solid #ababab;padding:0 12px;margin-top:-1px;height:25px}
.add{margin-left:33px;height:29px}
.d{margin-left:auto;width:29px;background:#fff;display:flex;align-items:center;justify-content:center}
scroll-bar{width:728px;height:19px;margin:4px 25px 0 1px}
`, () => `<div class="nav"><button aria-label="Previous sheet">${icon('navL')}</button><button aria-label="Next sheet">${icon('navR')}</button></div><button class="tab on">Payroll Register</button><button class="tab">Gen. Journal</button><button class="tab">Ledger</button><button class="add" aria-label="New sheet">${icon('plus')}</button><div class="d">${icon('dots')}</div><scroll-bar style="--thumb:646;--space:45"></scroll-bar>`);

define('status-bar', `
:host{display:flex;align-items:center;height:26px;background:#217346;color:#fff;font-size:12px;flex:none}
.a{gap:2px;margin-left:27px}
.r{margin-left:auto;display:flex;align-items:center;height:26px}
.v{width:50px;height:26px}.on{background:#004b1c}
input{appearance:none;width:126px;height:20px;margin:0 5px;background:linear-gradient(#fff,#fff) center/100% 1px no-repeat}
input::-webkit-slider-thumb{appearance:none;width:6px;height:14px;background:#fff}
.p{width:57px;text-align:right;padding-right:11px}
`, () => `<span style="padding-left:9px">Ready</span><button class="a">${icon('access')}Accessibility: Investigate</button><div class="r"><button class="v on" aria-label="Normal">${icon('vNormal')}</button><button class="v" aria-label="Page layout">${icon('vPage')}</button><button class="v" aria-label="Page break preview">${icon('vBreak')}</button><button aria-label="Zoom out" style="margin-left:7px"><svg width="11" height="11"><path d="M0 5.500h11" stroke="#fff"/></svg></button><input type="range" aria-label="Zoom" min="0" max="200" value="100"><button aria-label="Zoom in"><svg width="11" height="11"><path d="M0 5.500h11M5.500 0v11" stroke="#fff"/></svg></button><span class="p">100%</span></div>`);

define('task-bar', `
:host{display:grid;grid-template-columns:1fr auto 1fr;align-items:center;height:60px;flex:none;background:linear-gradient(100deg,#d9d9d900 88%,#cdeccb 92%,#d9f8d6 97%,#d0f0cd),#d9d9d9;color:#1c1c1c;line-height:21px}
.w{display:flex;align-items:center;gap:11px;padding-left:27px}.w b{font-weight:400;color:#107c10}
.m{display:flex;align-items:center;padding-left:2px}
.m button{width:55px;height:60px;position:relative}
.m .run::after{content:"";position:absolute;left:24px;top:50px;width:8px;height:4px;border-radius:2px;background:#7d7d7d}
.m .find{width:124px;height:38px;border-radius:19px;background:#f4f4f4;gap:8px;margin:0 5px;padding-right:0}
.t{display:flex;align-items:center;justify-content:flex-end;padding-right:24px;text-align:center}
`, () => `<div class="w">${icon('stocks')}<span>AMC<br><b>+6.94%</b></span></div>
<div class="m"><button aria-label="Start">${icon('windows')}</button><button class="find">${icon('search')}Search</button>${[['taskview'], ['chat'], ['folder', 1], ['edge', 1], ['store'], ['amazon'], ['dropbox'], ['outlook', 1], ['spotify', 1], ['excel', 1], ['ppt', 1], ['chrome', 1], ['word', 1]].map(([n, r]) => `<button aria-label="${n}"${r ? ' class="run"' : ''}>${icon(n)}</button>`).join('')}</div>
<div class="t">${icon('trayUp')}<ui-icon name="onedrive" style="margin-left:12px"></ui-icon><ui-icon name="sync" style="margin-left:9px"></ui-icon><span style="margin:0 22px 0 17px">ENG<br>US</span>${icon('wifi')}<ui-icon name="mute" style="margin:0 10px"></ui-icon>${icon('battery')}<span style="text-align:right;margin:0 12px 0 20px">8:40 AM<br>2023-04-11</span>${icon('moon')}</div>`);

define('voice-bar', `
:host{display:flex;position:absolute;left:calc(50% - 65px);bottom:120px;width:130px;height:50px;border:1px solid #b5b5b5;border-radius:10px;background:#f5f5f5;box-shadow:0 20px 36px rgba(0,0,0,.28),0 0 12px rgba(0,0,0,.12);overflow:visible}
.h{width:30px;border-right:1px solid #dcdcdc;display:flex;align-items:center;justify-content:center}.h i{width:4px;height:20px;border-radius:2px;background:#828282}
.m{width:52px}.o{width:40px}
`, () => `<div class="h"><i></i></div><button class="m" aria-label="Microphone">${icon('mic')}</button><button class="o" aria-label="More">${icon('more')}</button>`);

define('excel-app', `
:host{display:flex;flex-direction:column;height:100vh;position:relative;background:#fff;overflow:hidden}
.main{flex:1;display:flex;min-height:0}
work-sheet{flex:1;min-width:0}
.sb{width:26px;padding:2px 3px 0 4px;display:flex}
scroll-bar{flex:1}
`, () => `<title-bar></title-bar><tab-strip></tab-strip><excel-ribbon></excel-ribbon><formula-bar></formula-bar><div class="main"><work-sheet></work-sheet><div class="sb"><scroll-bar vertical style="--thumb:650;--space:25"></scroll-bar></div></div><sheet-tabs></sheet-tabs><status-bar></status-bar><task-bar></task-bar><voice-bar></voice-bar>`);
</script>
</body>
</html>
